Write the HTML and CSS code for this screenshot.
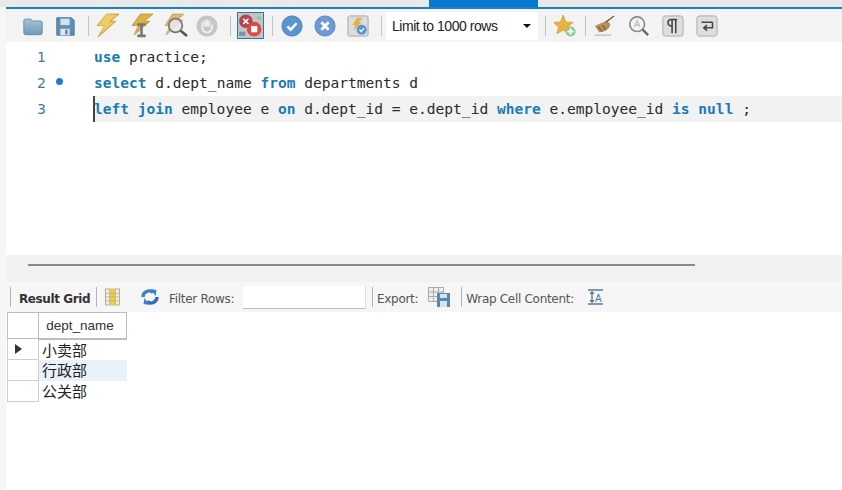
FILE: index.html
```html
<!DOCTYPE html>
<html lang="en">
<head>
<meta charset="utf-8">
<title>Query</title>
<link rel="stylesheet" href="styles.css">
</head>
<body>
<div class="tabs"><div class="tab-active"></div></div>
<div class="app">
  <div class="toolbar">
    <span class="btn w32"><svg viewBox="0 0 24 24"><defs><linearGradient id="fold" x1="0" y1="0" x2="0" y2="1"><stop offset="0" stop-color="#a9c3d5"/><stop offset="1" stop-color="#6f9ab8"/></linearGradient></defs><path d="M2 6.500a2 2 0 0 1 2-2h5.500l1.500 2h9a2 2 0 0 1 2 2v11a2 2 0 0 1-2 2H4a2 2 0 0 1-2-2z" fill="url(#fold)" stroke="#5f8cab"/></svg></span>
    <span class="btn w32"><svg viewBox="0 0 24 24"><path d="M3 3h16l3 3v16H3z" fill="#5f8fb6" stroke="#4a7396"/><rect x="7" y="4" width="10" height="7" fill="#d5e1ea"/><rect x="7" y="15" width="10" height="7" fill="#e3e8ec"/><rect x="12" y="16" width="3" height="5" fill="#5f8fb6"/></svg></span>
    <i class="sep s1"></i>
    <span class="btn w34"><svg class="big" viewBox="0 0 24 24"><path d="M11 1h12l-8 7h5L3 23l6-11H2z" fill="#e9c04a" stroke="#b8922f" stroke-width=".7"/><path d="M11 1l-8 11h5l-3 7 12-10h-5l7-7z" fill="#f1d67a" opacity=".6"/></svg></span>
    <span class="btn w34"><svg class="big" viewBox="0 0 24 24"><path d="M11 1h12l-8 7h5L5 21l4-9H3z" fill="#dcb445" stroke="#a98b36" stroke-width=".7"/><path d="M8 11h8M12 11v10M8 22h8" stroke="#777" stroke-width="2.500" fill="none"/></svg></span>
    <span class="btn w34"><svg class="big" viewBox="0 0 24 24"><path d="M9 1h11l-6 6h5L3 21l4-9H2z" fill="#d9bb70" stroke="#ab9250" stroke-width=".6"/><circle cx="12" cy="12" r="6.500" fill="#e9e9e9" fill-opacity=".85" stroke="#7a7a7a" stroke-width="1.700"/><path d="M17 17l6 5" stroke="#555" stroke-width="2.500"/></svg></span>
    <span class="btn w30"><svg viewBox="0 0 24 24"><circle cx="12" cy="12" r="11.500" fill="#c6c6c6"/><path d="M7 12V8.500M9.500 12V6.500M12 12V6M14.500 12V7M7 11v4q1 4 5 4t5-4l1-4" stroke="#f1f1f1" stroke-width="2" fill="none" stroke-linecap="round"/></svg></span>
    <i class="sep s2"></i>
    <span class="btn toggle"><svg viewBox="0 0 24 24"><rect width="24" height="24" rx="2" fill="#c4c4c4"/><circle cx="7.500" cy="8" r="6.500" fill="#b5434f"/><path d="M5 5.500l5 5M10 5.500l-5 5" stroke="#fff" stroke-width="1.600"/><circle cx="15.500" cy="15.500" r="7" fill="#dc4a42"/><rect x="12.500" y="12.500" width="6" height="6" fill="#fff"/><path d="M1 18h6v4H1z" fill="#7895a8"/><circle cx="20" cy="4.500" r="1.800" fill="#8c8"/></svg></span>
    <i class="sep s3"></i>
    <span class="btn w33"><svg viewBox="0 0 24 24"><circle cx="12" cy="12" r="11" fill="#5b95d1" stroke="#4a7cb5"/><path d="M7 12.500l3.500 3.500L17 9" stroke="#fff" stroke-width="2.600" fill="none"/></svg></span>
    <span class="btn w33"><svg viewBox="0 0 24 24"><circle cx="12" cy="12" r="11" fill="#6b9bd2" stroke="#5584bc"/><path d="M8 8l8 8M16 8l-8 8" stroke="#fff" stroke-width="3"/></svg></span>
    <span class="btn w34"><svg viewBox="0 0 24 24"><rect x="1" y="1" width="22" height="22" rx="2" fill="#dcdcdc" stroke="#a5a5a5"/><path d="M11 3h6l-4 5h3L7 17l2-6H6z" fill="#e0b442"/><circle cx="16" cy="16" r="5.500" fill="#5b95d1"/><path d="M13.500 16l2 2 3-3.500" stroke="#fff" stroke-width="1.300" fill="none"/></svg></span>
    <i class="sep s4"></i>
    <div class="limit"><span>Limit to 1000 rows</span><b class="caret"></b></div>
    <i class="sep s5"></i>
    <span class="btn w33"><svg viewBox="0 0 24 24"><path d="M10 0l3 7.500 8 .500-6 5 2 7.500-7-4-7 4 2-7.500-6-5 8-.500z" fill="#eab23e" stroke="#c58f2d" stroke-width=".6"/><circle cx="18" cy="18" r="5.500" fill="#8cc98a"/><path d="M18 14.500v7M14.500 18h7" stroke="#fff" stroke-width="2"/></svg></span>
    <i class="sep s6"></i>
    <span class="btn w36"><svg viewBox="0 0 24 24"><path d="M23 1L13 7 2 12l5 7c7-1 11-4 12-9l-3-3z" fill="#b88f5b"/><path d="M23 1l-9 7M6 13l4 5M10 11l4 5" stroke="#7a5c34" stroke-width="1.300"/><path d="M2 22h18" stroke="#cfcbc2" stroke-width="2"/></svg></span>
    <span class="btn w34"><svg viewBox="0 0 24 24"><circle cx="10" cy="10" r="8" fill="#f3f3f3" stroke="#888" stroke-width="1.800"/><path d="M7 13l3-7 3 7M8 11h4" stroke="#bbb" stroke-width="1.200" fill="none"/><path d="M16 16l6 6" stroke="#666" stroke-width="2.600"/></svg></span>
    <span class="btn w34"><svg viewBox="0 0 24 24"><rect x="1" y="1" width="22" height="22" rx="3" fill="#dedede" stroke="#a8a8a8"/><path d="M15 5v15M11 5v15M16.500 5H10a3.500 3.500 0 0 0 0 7h2" stroke="#444" stroke-width="1.700" fill="none"/></svg></span>
    <span class="btn w34"><svg viewBox="0 0 24 24"><rect x="1" y="1" width="22" height="22" rx="3" fill="#dedede" stroke="#a8a8a8"/><path d="M6 8h12M18 8v6h-8M12 11l-3.500 3 3.500 3" stroke="#444" stroke-width="1.700" fill="none"/></svg></span>
  </div>
  <div class="editor">
    <div class="line"><span class="num">1</span><span class="mark"></span><code><b>use</b> practice;</code></div>
    <div class="line"><span class="num">2</span><span class="mark"><i class="dot"></i></span><code><b>select</b> d.dept_name <b>from</b> departments d</code></div>
    <div class="line"><span class="num">3</span><span class="mark"></span><code class="current"><b>left join</b> employee e <b>on</b> d.dept_id = e.dept_id <b>where</b> e.employee_id <b>is null</b> ;</code></div>
  </div>
  <div class="splitter"><div class="scroll"></div></div>
  <div class="resultbar">
    <i class="rsep first"></i>
    <strong>Result Grid</strong>
    <i class="rsep"></i>
    <svg class="ic15" viewBox="0 0 16 18"><rect x=".5" y=".5" width="15" height="17" fill="#eee" stroke="#b9a986"/><rect x="5" y="1" width="6" height="16" fill="#f3cf3e"/><path d="M1 5h14M1 9h14M1 13h14M5 1v16M11 1v16" stroke="#b9a986" stroke-width=".8"/></svg>
    <svg class="refresh" viewBox="0 0 20 18"><path d="M3 9a6 6 0 0 1 10-4.500" stroke="#3a82c8" stroke-width="3.400" fill="none"/><path d="M17 9a6 6 0 0 1-10 4.500" stroke="#2f6fb0" stroke-width="3.400" fill="none"/><path d="M10.500 1l6 1-1 6zM9.500 17l-6-1 1-6z" fill="#3a82c8"/></svg>
    <span class="lbl filter">Filter Rows:</span>
    <input class="search" type="text" aria-label="Filter Rows">
    <i class="rsep m"></i>
    <span class="lbl">Export:</span>
    <svg class="export" viewBox="0 0 23 20"><path d="M.5.500h15v14H.5zM.5 5h15M.5 9.500h15M5.500.500v14M10.500.500v14" fill="#eee" stroke="#aaa"/><path d="M9 6h13v14H9z" fill="#5688b0"/><rect x="12" y="7" width="7" height="4" fill="#d5e3ee"/><rect x="12" y="14" width="7" height="6" fill="#d5e3ee"/></svg>
    <i class="rsep m2"></i>
    <span class="lbl">Wrap Cell Content:</span>
    <svg class="wrap" viewBox="0 0 15 16"><path d="M0 1h15M0 15h15" stroke="#4d7fa8" stroke-width="1.300"/><path d="M4 3v10M2 5l2-2.500L6 5M2 11l2 2.500L6 11" stroke="#345" fill="none"/><text x="7" y="12.500" class="wrap-a">A</text></svg>
  </div>
  <table class="grid">
    <thead><tr><th class="corner"></th><th class="name">dept_name</th></tr></thead>
    <tbody>
      <tr><td class="rowhead"><b class="arrow"></b></td><td>小卖部</td></tr>
      <tr><td class="rowhead"></td><td class="sel">行政部</td></tr>
      <tr><td class="rowhead"></td><td>公关部</td></tr>
    </tbody>
  </table>
</div>
</body>
</html>
```
FILE: styles.css
```css
* { box-sizing: border-box; }
html, body { margin: 0; height: 100%; }
body { width: 842px; height: 490px; overflow: hidden; background: #f6f6f6; font-family: "Liberation Sans", Arial, sans-serif; }
.tabs { height: 7px; background: #e9e9e9; display: flex; padding-left: 429px; }
.tab-active { width: 109px; background: #0a78cf; }
.app { margin-left: 6px; height: 483px; background: #fff; border-top: 2px solid #1b7fc9; display: flex; flex-direction: column; }
.toolbar { height: 33px; flex: none; display: flex; align-items: center; padding-left: 11px; background: #f3f3f3; }
.btn { display: flex; justify-content: center; align-items: center; flex: none; height: 26px; }
.btn svg { width: 22px; height: 22px; }
.btn svg.big { width: 25px; height: 25px; }
.w30 { width: 30px; } .w32 { width: 32px; } .w33 { width: 33px; } .w34 { width: 34px; } .w36 { width: 36px; }
.sep { flex: none; width: 1px; height: 20px; background: #c4c4c4; }
.s1 { margin: 0 1px 0 7px; }
.s2 { margin: 0 6px 0 8px; }
.s3 { margin: 0 2px 0 8px; }
.s4 { margin: 0 4px 0 6px; }
.s5 { margin: 0 2px 0 7px; }
.s6 { margin: 0 0 0 4px; }
.toggle { width: 27px; height: 27px; border: 1px solid #2f74ad; background: #e6e6e6; }
.toggle svg { width: 25px; height: 25px; }
.limit { width: 152px; height: 28px; flex: none; background: #fff; display: flex; align-items: center; justify-content: space-between; padding: 0 7px 0 6px; font-size: 14px; color: #222; letter-spacing: -.45px; }
.caret { width: 0; height: 0; border-left: 4px solid transparent; border-right: 4px solid transparent; border-top: 4px solid #111; }
.editor { height: 213px; flex: none; padding-top: 2px; background: #fff; }
.line { height: 26px; display: flex; align-items: center; }
.num { width: 40px; text-align: right; font: 14px "DejaVu Sans", sans-serif; color: #3b7a9a; }
.mark { width: 48px; flex: none; padding-left: 10px; display: flex; }
.dot { width: 7px; height: 7px; margin-top: -4px; border-radius: 50%; background: #1a7fd0; }
code { flex: 1; height: 26px; font: 14.55px/26px "DejaVu Sans Mono", monospace; color: #2a2a2a; white-space: pre; }
code b { color: #1b7cb4; }
.current { background: #f2f2f2; border-left: 2px solid #444; margin-left: -1px; text-indent: -1px; }
.splitter { height: 27px; flex: none; background: #f1f1f1; padding: 9px 0 0 22px; }
.scroll { width: 667px; height: 2px; background: #8a8a8a; }
.resultbar { height: 30px; flex: none; display: flex; align-items: center; background: #f6f6f6; padding-left: 4px; font-size: 12px; color: #333; }
.resultbar strong { font: bold 12px "DejaVu Sans", sans-serif; letter-spacing: -.4px; color: #333; margin: 3px 0 0 8px; width: 68px; white-space: nowrap; }
.rsep { flex: none; width: 1px; height: 20px; background: #a9b6bf; margin: 0 8px 0 9px; }
.first { margin: 0; }
.m { margin: 0 4px 0 6px; }
.m2 { margin: 0 4px 0 10px; }
.lbl { font: 12px "DejaVu Sans", sans-serif; letter-spacing: -.3px; color: #555; white-space: nowrap; margin-top: 3px; }
.ic15 { width: 15px; height: 18px; flex: none; }
.refresh { width: 20px; height: 18px; flex: none; margin: 0 9px 0 20px; }
.filter { width: 74px; }
.search { width: 123px; height: 23px; flex: none; border: 0; border-bottom: 1px solid #bbb; border-right: 1px solid #ddd; background: #fff; padding: 0; }
.export { width: 23px; height: 20px; flex: none; margin-left: 10px; }
.wrap { width: 15px; height: 16px; flex: none; margin-left: 14px; }
.wrap-a { font: 10px "Liberation Sans", sans-serif; fill: #4d7fa8; }
.grid { border-collapse: collapse; margin-left: 1px; table-layout: fixed; width: 120px; }
.grid th, .grid td { border: 1px solid #bdbdbd; padding: 0; }
.corner { width: 31px; height: 26px; background: #fff; border-right: 2px solid #bdbdbd; }
.grid .name { font: 13.500px "Liberation Sans", sans-serif; color: #333; background: #fff; border-bottom-width: 2px; padding-right: 5px; }
.grid td { height: 21px; font: 15px/20px "Noto Sans CJK SC", sans-serif; color: #222; border: 0; padding-left: 3px; }
.grid .rowhead { border: 1px solid #cfcfcf; border-top: 1px solid #e2e2e2; padding-left: 7px; }
.grid .sel { background: #e9f1fb; }
.arrow { display: block; width: 0; height: 0; border-left: 7px solid #333; border-top: 5.5px solid transparent; border-bottom: 5.5px solid transparent; }
```
